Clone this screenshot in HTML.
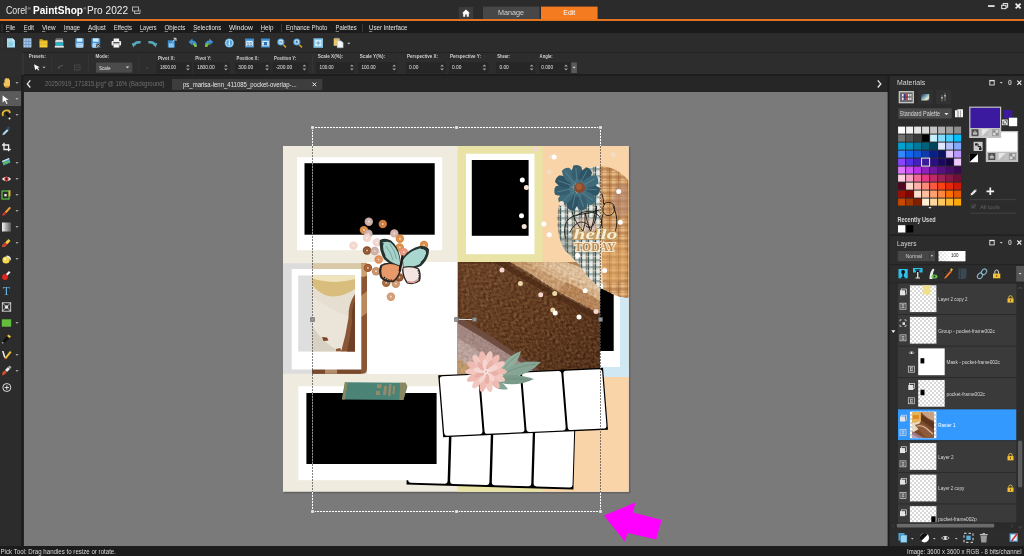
<!DOCTYPE html>
<html><head><meta charset="utf-8"><title>Corel PaintShop Pro 2022</title>
<style>
*{box-sizing:border-box;margin:0;padding:0}
html,body{width:1024px;height:556px;overflow:hidden;background:#2c2c2c;font-family:"Liberation Sans",sans-serif;color:#ddd}
.abs{position:absolute}
#title{left:0;top:0;width:1024px;height:19px;background:#2b2b2b}
#oline{left:0;top:19px;width:1024px;height:1.600px;background:#e2741f}
#menu{left:0;top:20.600px;width:1024px;height:12.600px;background:#1b1b1b}
#tool{left:0;top:33.200px;width:1024px;height:19px;background:#2c2c2c}
#opts{left:0;top:52px;width:1024px;height:24px;background:#2d2d2d}
#optline{left:22px;top:73.800px;width:1002px;height:1.900px;background:#1d1d1d}
#tabs{left:23.500px;top:75.700px;width:864.200px;height:16px;background:#262626}
#canvas{left:23.500px;top:91.700px;width:864.200px;height:454.300px;background:#7a7a7a}
#left{left:0;top:76px;width:22px;height:470px;background:#2c2c2c}
#right{left:888px;top:76px;width:136px;height:470px;background:#2c2c2c}
#status{left:0;top:546px;width:1024px;height:10px;background:#1c1c1c}
svg text{font-family:"Liberation Sans",sans-serif}
</style></head><body>
<div class="abs" id="title"></div>
<div class="abs" id="oline"></div>
<div class="abs" id="menu"></div>
<div class="abs" id="tool"></div>
<div class="abs" id="opts"></div>
<div class="abs" id="optline"></div>
<div class="abs" id="tabs"></div>
<div class="abs" id="canvas"></div>
<div class="abs" id="left"></div>
<div class="abs" id="right"></div>
<div class="abs" id="status"></div>
<svg class="abs" style="left:0;top:0;will-change:transform" width="1024" height="556" viewBox="0 0 1024 556">
<defs>
<pattern id="plaidA" width="7" height="7" patternUnits="userSpaceOnUse">
<rect width="7" height="7" fill="#a9b3ab"/><rect x="1.200" width="3.300" height="7" fill="#e4ebe8"/><rect width="1.100" height="7" fill="#3f5a56"/><rect x="5.300" width=".9" height="7" fill="#8f6852" opacity=".8"/><rect width="7" height="2.400" fill="#4f625c" opacity=".42"/><rect y="4.300" width="7" height=".9" fill="#f4efe4" opacity=".6"/>
</pattern>
<pattern id="plaidB" width="9" height="8" patternUnits="userSpaceOnUse">
<rect width="9" height="8" fill="#d29a60"/><rect width="3.500" height="8" fill="#e2b482"/><rect x="6" width="1.200" height="8" fill="#8f5a34" opacity=".55"/><rect width="9" height="2.600" fill="#9a6236" opacity=".45"/><rect y="4" width="9" height=".7" fill="#a97444" opacity=".5"/><rect y="5.600" width="9" height=".7" fill="#f0cfa0" opacity=".5"/><rect y="7" width="9" height=".6" fill="#a97444" opacity=".4"/>
</pattern>
<linearGradient id="bread" x1="0" y1="0" x2="1" y2="1">
<stop offset="0" stop-color="#6a4227"/><stop offset=".5" stop-color="#5c361d"/><stop offset="1" stop-color="#472713"/>
</linearGradient>
<filter id="grain" x="0" y="0" width="100%" height="100%">
<feTurbulence type="fractalNoise" baseFrequency="0.36" numOctaves="3" seed="7" result="n"/>
<feColorMatrix in="n" type="matrix" values="0 0 0 0 0  0 0 0 0 0  0 0 0 0 0  1.600 1.200 0 0 -1.050" result="a"/>
<feComposite in="SourceGraphic" in2="a" operator="in"/>
</filter>
<filter id="soft" x="-5%" y="-5%" width="110%" height="110%"><feGaussianBlur stdDeviation="1.200"/></filter>
<filter id="soft2" x="-5%" y="-5%" width="110%" height="110%"><feGaussianBlur stdDeviation=".5"/></filter>
<clipPath id="pageclip"><rect x="283" y="146" width="345.700" height="345.700"/></clipPath>
<clipPath id="breadclip"><rect x="457.500" y="262" width="142.500" height="116"/></clipPath>
<clipPath id="polclip"><rect x="312" y="275.500" width="43" height="76"/></clipPath>
<clipPath id="blobA"><path d="M600 166Q586 167 572 177Q559 192 556.800 220Q558 238 564.500 250L572 257L578 263.500L587.400 276L600 288.500Z"/></clipPath>
<clipPath id="blobB"><path d="M600 166Q618 167 628.700 181V297.500l-3 .5l-3-1l-3 0l-3-1.500l-3-.5l-3-2l-3-1l-3-2l-1.700-.5Z"/></clipPath>
</defs>
<rect x="284" y="147" width="346.500" height="346.500" fill="#000" opacity=".18"/>
<g clip-path="url(#pageclip)">
<rect x="283" y="146" width="346" height="346" fill="#efebdf"/>
<rect x="457.500" y="146" width="85.500" height="346" fill="#e9e3a6"/>
<rect x="542.600" y="146" width="86.500" height="346" fill="#f8d4a8"/>
<!-- top-left photo frame -->
<rect x="297" y="157.200" width="145.200" height="93" fill="#fff"/>
<rect x="304.500" y="163.200" width="130.200" height="71.500" fill="#000"/>
<!-- polaroid top middle -->
<rect x="466" y="153.700" width="68.500" height="100.500" fill="#fff"/>
<rect x="471.800" y="160" width="56.800" height="75.800" fill="#000"/>
<!-- gray + middle-left area -->
<rect x="283" y="263.200" width="84" height="110.500" fill="#dcdcdc"/>
<rect x="312" y="263.200" width="49.500" height="6" fill="#d9c9a6"/>
<path d="M361 263.200H367V369Q367 373.700 362 373.700H312V369H361Z" fill="#8a5636"/>
<path d="M361 263.200h6v12q-3 3-6 1z" fill="#caa070"/>
<path d="M361 296l6-5v22l-6 4z" fill="#b98a60"/>
<path d="M312 369h49v4.700h-49z" fill="#7a4a2e"/>
<path d="M325 369h12v4.700h-12z" fill="#c9a98a" opacity=".7"/>
<rect x="291.700" y="269" width="69.600" height="100.500" fill="#fff"/>
<rect x="298.200" y="275.500" width="56.600" height="76" fill="#dedede"/>
<g clip-path="url(#polclip)">
<rect x="312" y="275.500" width="43" height="76" fill="#e6ded0"/>
<path d="M312 275.500H355V289Q338 300 325 295Q316 291 312 284Z" fill="#d9bd7c"/>
<path d="M312 275.500H355V279Q335 285 312 278.500Z" fill="#efe3bc"/>
<path d="M312 296Q330 310 348 316L343 352H312Z" fill="#ebe4d8"/>
<path d="M312 326Q325 345 340 351.500H312Z" fill="#d9d0c4"/>
<path d="M355 294Q348 304 348.500 318Q346 335 341 352H355Z" fill="#8b5634"/>
<path d="M355 300Q351 310 352 322Q350 338 347 352H355Z" fill="#6e4126"/>
<path d="M322 337l5 .5l1.500 3l-5 .5z" fill="#7a4526"/>
<path d="M336 349l4-1l2 3.500h-6z" fill="#8b5634"/>
</g>
<rect x="367" y="262" width="90.500" height="112" fill="#fff"/>
<!-- plaid blob -->
<g clip-path="url(#blobA)"><rect x="550" y="160" width="52" height="140" fill="url(#plaidA)"/>
<ellipse cx="586" cy="226" rx="12" ry="9" fill="#e2c0ae" opacity=".65" filter="url(#soft)"/>
<rect x="556" y="236" width="20" height="30" fill="#5d6a62" opacity=".35" filter="url(#soft)"/></g>
<!-- right side frame -->
<rect x="600" y="284" width="20" height="83" fill="#fff"/>
<rect x="620" y="296" width="9" height="81" fill="#cfe8f4"/>
<rect x="600" y="367" width="29" height="10" fill="#cfe8f4"/>
<g clip-path="url(#blobB)"><rect x="598" y="160" width="32" height="140" fill="url(#plaidB)"/>
<ellipse cx="622" cy="200" rx="9" ry="17" fill="#b58670" opacity=".6" filter="url(#soft)"/>
<ellipse cx="614" cy="262" rx="14" ry="22" fill="#e3a661" opacity=".45" filter="url(#soft)"/></g>
<path d="M600 289.500l2-1l2 1.500l2 .5l2 1.500l2 .5l2 1.500l1.700 .5V351H600Z" fill="#000"/>

<g clip-path="url(#breadclip)">
<rect x="457.500" y="262" width="142.500" height="116" fill="url(#bread)"/>
<rect x="457.500" y="262" width="142.500" height="116" fill="#2a1206" filter="url(#grain)" opacity=".42"/>
<rect x="457.500" y="262" width="142.500" height="116" fill="#c89868" filter="url(#grain)" opacity=".35" transform="translate(3,2)"/>
<path d="M504 262Q540 284 566 298Q584 307 600 316v6Q570 306 545 292Q516 276 494 262Z" fill="#4a2a16" opacity=".7"/>
<path d="M510 262H600V313Q584 305 566 296Q545 284 528 272Z" fill="#c79a6c"/>
<path d="M526 262H600V302Q580 292 562 282Q545 272 526 262Z" fill="#dab489"/>
<path d="M540 262H590Q596 270 600 280V292Q570 280 540 262Z" fill="#e3c4a0"/>
<path d="M566 262H600V276Q584 268 566 262Z" fill="#b88a60"/>
<path d="M566 282Q584 290 600 301V313Q584 305 558 291Z" fill="#b47e4e"/>
<path d="M510 262H600V313Q584 305 566 296Q545 284 528 272Z" fill="#7a4a22" filter="url(#grain)" opacity=".3"/>
<path d="M510 262H600V313Q584 305 566 296Q545 284 528 272Z" fill="#fff2e0" filter="url(#grain)" opacity=".3" transform="translate(2,3)"/>
<path d="M457.500 316Q500 340 550 378H457.500Z" fill="#6e4c40"/>
<path d="M457.500 323Q500 347 543 378H457.500Z" fill="#ab8f8a"/>
<path d="M457.500 338Q488 356 514 378H457.500Z" fill="#c4aca6"/>
<path d="M457.500 358Q470 366 482 378H457.500Z" fill="#c9a274"/>
<path d="M457.500 323Q500 347 543 378H457.500Z" fill="#5a3a30" filter="url(#grain)" opacity=".25"/>
</g>
<g clip-path="url(#blobA)"><rect x="570" y="258" width="32" height="40" fill="url(#plaidA)"/></g>

<g transform="translate(406.500,484.600) rotate(1.700)">
<rect x="0" y="-64" width="167" height="64" fill="#000"/>
<rect x="1.500" y="-62.500" width="39.500" height="60.500" rx="3" fill="#fff"/>
<rect x="43.500" y="-62.500" width="39.300" height="60.500" rx="3" fill="#fff"/>
<rect x="85.200" y="-62.500" width="39.500" height="60.500" rx="3" fill="#fff"/>
<rect x="127" y="-62.500" width="39" height="60.500" rx="3" fill="#fff"/>
</g>
<!-- bottom-left frame -->
<rect x="298.300" y="386.200" width="144.400" height="94" fill="#fff"/>
<rect x="306.400" y="393" width="130.200" height="71" fill="#000"/>
<path d="M344.900 382.300L405.600 382.700L407.300 386.700L403.400 399.900L341.900 399.400Z" fill="#4b8377"/>
<path d="M344.900 382.300l3 0l-3 17.100l-3 0zM400 382.700l5.600 0l1.700 4l-3.900 13.200l-4 0z" fill="#9c8a5c" opacity=".75"/>
<path d="M377 384l5 .5l-1 4l-4-.5zM384 386l3 0l-1 9l-3 0zM376 391l4 0l0 4l-4 0zM389 384l2.500 0l-1 12l-2.500 0zM393 386l2 0l-.5 8l-2 0z" fill="#b58e62" opacity=".7"/>
<!-- pocket top row -->
<g transform="translate(438.200,375.300) rotate(-2.600) skewX(2)">
<rect x="0" y="0" width="165" height="62" fill="#000"/>
<rect x="1.300" y="1.200" width="38.400" height="59.500" rx="3" fill="#fff"/>
<rect x="41.700" y="1.200" width="40" height="59.500" rx="3" fill="#fff"/>
<rect x="83.700" y="1.200" width="39.300" height="59.500" rx="3" fill="#fff"/>
<rect x="125" y="1.200" width="38.800" height="59.500" rx="3" fill="#fff"/>
</g>

<path d="M499 371Q506 356 521 351Q518 364 506 373Z" fill="#8fae9c"/>
<path d="M501 373Q516 359 541 362Q529 375 507 379Z" fill="#86a594"/>
<path d="M499 376Q516 373 534 379Q518 387 501 383Z" fill="#7b9a8a"/>
<path d="M493 381Q501 379 508 389Q498 391 493 385Z" fill="#86a594"/>
<path d="M503 374Q518 366 536 364M502 379Q516 378 530 380M502 371Q510 360 519 354" stroke="#6a8a7a" stroke-width=".6" fill="none"/>
<ellipse cx="498.5" cy="371.6" rx="8.500" ry="3.500" fill="#eebab2" transform="rotate(0.0 486 371.6)"/>
<ellipse cx="498.5" cy="371.6" rx="8.500" ry="3.500" fill="#f2c8c0" transform="rotate(25.7 486 371.6)"/>
<ellipse cx="498.5" cy="371.6" rx="8.500" ry="3.500" fill="#eebab2" transform="rotate(51.4 486 371.6)"/>
<ellipse cx="498.5" cy="371.6" rx="8.500" ry="3.500" fill="#f2c8c0" transform="rotate(77.1 486 371.6)"/>
<ellipse cx="498.5" cy="371.6" rx="8.500" ry="3.500" fill="#eebab2" transform="rotate(102.9 486 371.6)"/>
<ellipse cx="498.5" cy="371.6" rx="8.500" ry="3.500" fill="#f2c8c0" transform="rotate(128.6 486 371.6)"/>
<ellipse cx="498.5" cy="371.6" rx="8.500" ry="3.500" fill="#eebab2" transform="rotate(154.3 486 371.6)"/>
<ellipse cx="498.5" cy="371.6" rx="8.500" ry="3.500" fill="#f2c8c0" transform="rotate(180.0 486 371.6)"/>
<ellipse cx="498.5" cy="371.6" rx="8.500" ry="3.500" fill="#eebab2" transform="rotate(205.7 486 371.6)"/>
<ellipse cx="498.5" cy="371.6" rx="8.500" ry="3.500" fill="#f2c8c0" transform="rotate(231.4 486 371.6)"/>
<ellipse cx="498.5" cy="371.6" rx="8.500" ry="3.500" fill="#eebab2" transform="rotate(257.1 486 371.6)"/>
<ellipse cx="498.5" cy="371.6" rx="8.500" ry="3.500" fill="#f2c8c0" transform="rotate(282.9 486 371.6)"/>
<ellipse cx="498.5" cy="371.6" rx="8.500" ry="3.500" fill="#eebab2" transform="rotate(308.6 486 371.6)"/>
<ellipse cx="498.5" cy="371.6" rx="8.500" ry="3.500" fill="#f2c8c0" transform="rotate(334.3 486 371.6)"/>
<ellipse cx="493" cy="371.6" rx="5.500" ry="2.600" fill="#e9b0a8" transform="rotate(12.0 486 371.6)"/>
<ellipse cx="493" cy="371.6" rx="5.500" ry="2.600" fill="#f6d6d0" transform="rotate(48.0 486 371.6)"/>
<ellipse cx="493" cy="371.6" rx="5.500" ry="2.600" fill="#e9b0a8" transform="rotate(84.0 486 371.6)"/>
<ellipse cx="493" cy="371.6" rx="5.500" ry="2.600" fill="#f6d6d0" transform="rotate(120.0 486 371.6)"/>
<ellipse cx="493" cy="371.6" rx="5.500" ry="2.600" fill="#e9b0a8" transform="rotate(156.0 486 371.6)"/>
<ellipse cx="493" cy="371.6" rx="5.500" ry="2.600" fill="#f6d6d0" transform="rotate(192.0 486 371.6)"/>
<ellipse cx="493" cy="371.6" rx="5.500" ry="2.600" fill="#e9b0a8" transform="rotate(228.0 486 371.6)"/>
<ellipse cx="493" cy="371.6" rx="5.500" ry="2.600" fill="#f6d6d0" transform="rotate(264.0 486 371.6)"/>
<ellipse cx="493" cy="371.6" rx="5.500" ry="2.600" fill="#e9b0a8" transform="rotate(300.0 486 371.6)"/>
<ellipse cx="493" cy="371.6" rx="5.500" ry="2.600" fill="#f6d6d0" transform="rotate(336.0 486 371.6)"/>
<circle cx="486" cy="371.6" r="2.600" fill="#f8e4e0"/><circle cx="486" cy="371.6" r="1" fill="#e0a8a0"/>
<path d="M581 188Q589 179.5 599.5 184.5Q601 189 598 192.5Q589 196 581 188Z" fill="#2f5464" transform="rotate(8.0 577 188)"/>
<path d="M583 188L597 187" stroke="#6a96a6" stroke-width=".8" opacity=".7" transform="rotate(8.0 577 188)"/>
<path d="M581 188Q589 179.5 599.5 184.5Q601 189 598 192.5Q589 196 581 188Z" fill="#3f6a7a" transform="rotate(40.7 577 188)"/>
<path d="M583 188L597 187" stroke="#6a96a6" stroke-width=".8" opacity=".7" transform="rotate(40.7 577 188)"/>
<path d="M581 188Q589 179.5 599.5 184.5Q601 189 598 192.5Q589 196 581 188Z" fill="#365e6e" transform="rotate(73.5 577 188)"/>
<path d="M583 188L597 187" stroke="#6a96a6" stroke-width=".8" opacity=".7" transform="rotate(73.5 577 188)"/>
<path d="M581 188Q589 179.5 599.5 184.5Q601 189 598 192.5Q589 196 581 188Z" fill="#2f5464" transform="rotate(106.2 577 188)"/>
<path d="M583 188L597 187" stroke="#6a96a6" stroke-width=".8" opacity=".7" transform="rotate(106.2 577 188)"/>
<path d="M581 188Q589 179.5 599.5 184.5Q601 189 598 192.5Q589 196 581 188Z" fill="#3f6a7a" transform="rotate(138.9 577 188)"/>
<path d="M583 188L597 187" stroke="#6a96a6" stroke-width=".8" opacity=".7" transform="rotate(138.9 577 188)"/>
<path d="M581 188Q589 179.5 599.5 184.5Q601 189 598 192.5Q589 196 581 188Z" fill="#365e6e" transform="rotate(171.6 577 188)"/>
<path d="M583 188L597 187" stroke="#6a96a6" stroke-width=".8" opacity=".7" transform="rotate(171.6 577 188)"/>
<path d="M581 188Q589 179.5 599.5 184.5Q601 189 598 192.5Q589 196 581 188Z" fill="#2f5464" transform="rotate(204.4 577 188)"/>
<path d="M583 188L597 187" stroke="#6a96a6" stroke-width=".8" opacity=".7" transform="rotate(204.4 577 188)"/>
<path d="M581 188Q589 179.5 599.5 184.5Q601 189 598 192.5Q589 196 581 188Z" fill="#3f6a7a" transform="rotate(237.1 577 188)"/>
<path d="M583 188L597 187" stroke="#6a96a6" stroke-width=".8" opacity=".7" transform="rotate(237.1 577 188)"/>
<path d="M581 188Q589 179.5 599.5 184.5Q601 189 598 192.5Q589 196 581 188Z" fill="#365e6e" transform="rotate(269.8 577 188)"/>
<path d="M583 188L597 187" stroke="#6a96a6" stroke-width=".8" opacity=".7" transform="rotate(269.8 577 188)"/>
<path d="M581 188Q589 179.5 599.5 184.5Q601 189 598 192.5Q589 196 581 188Z" fill="#2f5464" transform="rotate(302.5 577 188)"/>
<path d="M583 188L597 187" stroke="#6a96a6" stroke-width=".8" opacity=".7" transform="rotate(302.5 577 188)"/>
<path d="M581 188Q589 179.5 599.5 184.5Q601 189 598 192.5Q589 196 581 188Z" fill="#3f6a7a" transform="rotate(335.3 577 188)"/>
<path d="M583 188L597 187" stroke="#6a96a6" stroke-width=".8" opacity=".7" transform="rotate(335.3 577 188)"/>
<circle cx="578" cy="188" r="9" fill="#4b7a8a" opacity=".55"/>
<circle cx="579.700" cy="187.700" r="5.300" fill="#8a4a2c"/><circle cx="579" cy="186.800" r="3" fill="#a45e3a"/>
<g fill="none" stroke="#1c1814" stroke-width=".9" stroke-linecap="round">
<path d="M602 194Q604 200 603.500 204Q609 200.500 613.500 204.500Q616.500 210 612 214.500Q606 217.500 603 212Q602 207 604.500 204"/>
<path d="M613 206Q618 216 616.500 226Q616 231 614 234"/>
<path d="M565.400 238Q563 228 567 221Q572 215 580 214.500Q590 213.500 599 210"/>
<path d="M572 212Q576 224 583 231Q586 224 585 213Q588 224 590.500 232Q594 220 596.500 206Q598 216 594 224Q590 230 586 226"/>
<path d="M576 216Q584 210 592 212Q600 214 602 222Q601 230 594 233"/>
<path d="M570 232Q574 224 580 222Q588 222 590 228"/>
<path d="M603 214Q600 222 603 230"/>
</g>
<g font-weight="bold" text-anchor="middle" style="font-family:'Liberation Serif',serif">
<text style="font-family:'Liberation Serif',serif" x="595.500" y="239" font-size="14" font-style="italic" fill="#f7edd2" stroke="#c49b60" stroke-width="2" paint-order="stroke" textLength="44" lengthAdjust="spacingAndGlyphs">hello</text>
<text style="font-family:'Liberation Serif',serif" x="595" y="250.600" font-size="12.500" fill="#c08c56" stroke="#f6e8cc" stroke-width="2.200" paint-order="stroke" textLength="41" lengthAdjust="spacingAndGlyphs">TODAY</text>
</g>
<circle cx="368.8" cy="221.7" r="4.2" fill="#c9aaa2"/><circle cx="368.8" cy="221.7" r="2.500" fill="none" stroke="#fff" stroke-width=".7" opacity=".22"/><circle cx="368.8" cy="221.7" r="1.100" fill="#fff" opacity=".6"/>
<circle cx="382.8" cy="224.0" r="4.2" fill="#c87432"/><circle cx="382.8" cy="224.0" r="2.500" fill="none" stroke="#fff" stroke-width=".7" opacity=".22"/><circle cx="382.8" cy="224.0" r="1.100" fill="#fff" opacity=".6"/>
<circle cx="363.9" cy="230.1" r="4.2" fill="#d8883e"/><circle cx="363.9" cy="230.1" r="2.500" fill="none" stroke="#fff" stroke-width=".7" opacity=".22"/><circle cx="363.9" cy="230.1" r="1.100" fill="#fff" opacity=".6"/>
<circle cx="368.4" cy="233.7" r="4.2" fill="#c9aaa2"/><circle cx="368.4" cy="233.7" r="2.500" fill="none" stroke="#fff" stroke-width=".7" opacity=".22"/><circle cx="368.4" cy="233.7" r="1.100" fill="#fff" opacity=".6"/>
<circle cx="367.0" cy="237.9" r="4.2" fill="#f2d4cb"/><circle cx="367.0" cy="237.9" r="2.500" fill="none" stroke="#fff" stroke-width=".7" opacity=".22"/><circle cx="367.0" cy="237.9" r="1.100" fill="#fff" opacity=".6"/>
<circle cx="394.3" cy="233.4" r="4.2" fill="#d0b0a8"/><circle cx="394.3" cy="233.4" r="2.500" fill="none" stroke="#fff" stroke-width=".7" opacity=".22"/><circle cx="394.3" cy="233.4" r="1.100" fill="#fff" opacity=".6"/>
<circle cx="399.9" cy="238.8" r="4.2" fill="#d8883e"/><circle cx="399.9" cy="238.8" r="2.500" fill="none" stroke="#fff" stroke-width=".7" opacity=".22"/><circle cx="399.9" cy="238.8" r="1.100" fill="#fff" opacity=".6"/>
<circle cx="353.5" cy="245.6" r="4.2" fill="#f2d4cb"/><circle cx="353.5" cy="245.6" r="2.500" fill="none" stroke="#fff" stroke-width=".7" opacity=".22"/><circle cx="353.5" cy="245.6" r="1.100" fill="#fff" opacity=".6"/>
<circle cx="376.9" cy="242.4" r="4.2" fill="#f2d4cb"/><circle cx="376.9" cy="242.4" r="2.500" fill="none" stroke="#fff" stroke-width=".7" opacity=".22"/><circle cx="376.9" cy="242.4" r="1.100" fill="#fff" opacity=".6"/>
<circle cx="367.0" cy="250.5" r="4.2" fill="#8b4a22"/><circle cx="367.0" cy="250.5" r="2.500" fill="none" stroke="#fff" stroke-width=".7" opacity=".22"/><circle cx="367.0" cy="250.5" r="1.100" fill="#fff" opacity=".6"/>
<circle cx="374.7" cy="251.0" r="4.2" fill="#c9aaa2"/><circle cx="374.7" cy="251.0" r="2.500" fill="none" stroke="#fff" stroke-width=".7" opacity=".22"/><circle cx="374.7" cy="251.0" r="1.100" fill="#fff" opacity=".6"/>
<circle cx="424.0" cy="245.0" r="4.2" fill="#d8883e"/><circle cx="424.0" cy="245.0" r="2.500" fill="none" stroke="#fff" stroke-width=".7" opacity=".22"/><circle cx="424.0" cy="245.0" r="1.100" fill="#fff" opacity=".6"/>
<circle cx="399.7" cy="247.4" r="4.2" fill="#d8883e"/><circle cx="399.7" cy="247.4" r="2.500" fill="none" stroke="#fff" stroke-width=".7" opacity=".22"/><circle cx="399.7" cy="247.4" r="1.100" fill="#fff" opacity=".6"/>
<circle cx="403.8" cy="252.3" r="4.2" fill="#e89078"/><circle cx="403.8" cy="252.3" r="2.500" fill="none" stroke="#fff" stroke-width=".7" opacity=".22"/><circle cx="403.8" cy="252.3" r="1.100" fill="#fff" opacity=".6"/>
<circle cx="378.7" cy="259.5" r="4.2" fill="#e08850"/><circle cx="378.7" cy="259.5" r="2.500" fill="none" stroke="#fff" stroke-width=".7" opacity=".22"/><circle cx="378.7" cy="259.5" r="1.100" fill="#fff" opacity=".6"/>
<circle cx="367.9" cy="267.9" r="4.2" fill="#9a5428"/><circle cx="367.9" cy="267.9" r="2.500" fill="none" stroke="#fff" stroke-width=".7" opacity=".22"/><circle cx="367.9" cy="267.9" r="1.100" fill="#fff" opacity=".6"/>
<circle cx="376.0" cy="271.2" r="4.2" fill="#c48c62"/><circle cx="376.0" cy="271.2" r="2.500" fill="none" stroke="#fff" stroke-width=".7" opacity=".22"/><circle cx="376.0" cy="271.2" r="1.100" fill="#fff" opacity=".6"/>
<circle cx="386.2" cy="282.8" r="4.2" fill="#a06030"/><circle cx="386.2" cy="282.8" r="2.500" fill="none" stroke="#fff" stroke-width=".7" opacity=".22"/><circle cx="386.2" cy="282.8" r="1.100" fill="#fff" opacity=".6"/>
<circle cx="395.8" cy="283.7" r="4.2" fill="#c89068"/><circle cx="395.8" cy="283.7" r="2.500" fill="none" stroke="#fff" stroke-width=".7" opacity=".22"/><circle cx="395.8" cy="283.7" r="1.100" fill="#fff" opacity=".6"/>
<circle cx="390.9" cy="296.7" r="4.2" fill="#d09870"/><circle cx="390.9" cy="296.7" r="2.500" fill="none" stroke="#fff" stroke-width=".7" opacity=".22"/><circle cx="390.9" cy="296.7" r="1.100" fill="#fff" opacity=".6"/>
<circle cx="399.4" cy="277.4" r="4.2" fill="#8b4a22"/><circle cx="399.4" cy="277.4" r="2.500" fill="none" stroke="#fff" stroke-width=".7" opacity=".22"/><circle cx="399.4" cy="277.4" r="1.100" fill="#fff" opacity=".6"/>
<g>
<path d="M400.500 263Q400 248 391 240.500Q385 237.500 380 240Q378.500 250 384 259Q391 266 400 267Z" fill="#26322f"/>
<path d="M400 262.500Q399 249.500 390.500 242.500Q386 241 382.500 242.500Q381.500 251 386.500 258Q392 263.500 400 265.500Z" fill="#a6d2ca"/>
<path d="M383 243Q381 249 385 256" stroke="#26322f" stroke-width="1.400" fill="none"/>
<path d="M386 246Q391 252 393 260M390 244Q395 251 396.500 259" stroke="#5d8a84" stroke-width=".6" fill="none"/>
<path d="M402 259Q408 249 420 246Q427 245.500 429 249.500Q429 259 421 266Q412 271 403 268.500Z" fill="#26322f"/>
<path d="M403 260Q409 251 419.500 248.500Q424.500 248 426.500 250.500Q426 259 419 264.500Q411 268.500 403.500 267Z" fill="#a9d6ce"/>
<path d="M421 248Q427.500 248 427 254Q425 260 421 263" stroke="#26322f" stroke-width="1.800" fill="none"/>
<path d="M399.500 266Q389 260 380.500 265Q377.500 271 380.500 278Q386 283.500 394 282Q400 277 401 269Z" fill="#2c2624"/>
<path d="M399 266.300Q390 262 382.500 265.800Q380 271 382.500 277Q387.500 281.500 393.500 280.300Q398.500 276 399.700 269Z" fill="#e8996a"/>
<path d="M384 277Q388 281 393.500 280" stroke="#2c2624" stroke-width="1.300" fill="none" stroke-dasharray="1.500 1"/>
<path d="M403 267Q412 264.500 419 268.500Q422 274 420 281Q414 286 407 283.500Q402.500 278 402 270Z" fill="#2c2624"/>
<path d="M403.500 268Q411 265.800 418 269.300Q420.300 274.500 418.300 280.500Q413.500 284.500 408 282.500Q404 277.500 403.500 270.500Z" fill="#f2e4e0"/>
<path d="M407.500 281.500Q413 284 418 279.500" stroke="#d89088" stroke-width="1.400" fill="none"/>
<path d="M418 270Q420 275 418.500 280" stroke="#2c2624" stroke-width="1.200" fill="none" stroke-dasharray="1.500 1"/>
<path d="M401.500 255l2.300 .7l-2.900 16l-2.400-.8z" fill="#1f1a18"/>
</g>
<circle cx="522.3" cy="180" r="2.500" fill="#ffffff"/>
<circle cx="526.4" cy="187.5" r="2.500" fill="#f6e2d4"/>
<circle cx="521.5" cy="215.8" r="2.500" fill="#ffffff"/>
<circle cx="524.2" cy="226.6" r="2.500" fill="#f6e2d4"/>
<circle cx="535" cy="149" r="2.500" fill="#f4d6d0"/>
<circle cx="551.2" cy="156.5" r="2.500" fill="#f3dcc4"/>
<circle cx="554.2" cy="157" r="2.500" fill="#ffffff"/>
<circle cx="549.3" cy="171.8" r="2.500" fill="#f3dcc4"/>
<circle cx="543.9" cy="223.9" r="2.500" fill="#ffffff"/>
<circle cx="549.3" cy="234.7" r="2.500" fill="#ffffff"/>
<circle cx="561.5" cy="203.4" r="2.500" fill="#f6e2d4"/>
<circle cx="618.7" cy="191.5" r="2.500" fill="#ffffff"/>
<circle cx="620.3" cy="222.3" r="2.500" fill="#ffffff"/>
<circle cx="613.3" cy="154.8" r="2.500" fill="#f3dcc4"/>
<circle cx="502" cy="270" r="2.500" fill="#f4d6d0"/>
<circle cx="520.4" cy="283.4" r="2.500" fill="#ead6a8"/>
<circle cx="540.7" cy="294.8" r="2.500" fill="#f4d6d0"/>
<circle cx="554.7" cy="293.4" r="2.500" fill="#ead6a8"/>
<circle cx="552.8" cy="310" r="2.500" fill="#ead6a8"/>
<circle cx="555.2" cy="313" r="2.500" fill="#ffffff"/>
<circle cx="579" cy="317" r="2.500" fill="#ffffff"/>
<circle cx="585.2" cy="290.7" r="2.500" fill="#ffffff"/>
<circle cx="596" cy="311.5" r="2.500" fill="#f4d6d0"/>
<circle cx="604.6" cy="270.5" r="2.500" fill="#ffffff"/>
<circle cx="577.6" cy="255.6" r="2.500" fill="#ffffff"/>
</g>
<g fill="none" stroke-width="1" shape-rendering="crispEdges">
<path d="M312.500 146V127.500H600.500V146M312.500 492V511.500H600.500V492" stroke="#8a8a8a"/>
<path d="M312.500 146V127.500H600.500V146M312.500 492V511.500H600.500V492" stroke="#fff" stroke-dasharray="2 1"/>
<path d="M312.500 146V492M600.500 146V492" stroke="#4a4a4a" stroke-dasharray="2 1" opacity=".7"/>
<path d="M312.500 163.200V234.700M312.500 393V464" stroke="#8c8c8c" stroke-dasharray="2 1"/>
<line x1="458" y1="319.500" x2="473" y2="319.500" stroke="#d8d8d8"/>
</g>
<g fill="#e6e6e6" stroke="#6a6a6a" stroke-width=".8">
<rect x="310.700" y="125.700" width="3.600" height="3.600"/><rect x="454.700" y="125.700" width="3.600" height="3.600"/><rect x="598.700" y="125.700" width="3.600" height="3.600"/>
<rect x="310.700" y="317.700" width="3.600" height="3.600" fill="#9a9a9a"/><rect x="454.700" y="317.700" width="3.600" height="3.600" fill="#9a9a9a"/><rect x="598.700" y="317.700" width="3.600" height="3.600" fill="#9a9a9a"/>
<rect x="310.700" y="509.700" width="3.600" height="3.600"/><rect x="454.700" y="509.700" width="3.600" height="3.600"/><rect x="598.700" y="509.700" width="3.600" height="3.600"/>
<rect x="472.700" y="317.700" width="3.600" height="3.600" fill="#9a9a9a"/>
</g>
<polygon points="603.900,515.500 635.400,502.600 633,512.500 661.600,520 656.100,539.500 627.600,533 624.800,541.500" fill="#ff00ff"/>
</svg>

<svg class="abs" style="left:0;top:0;will-change:transform" width="1024" height="556" viewBox="0 0 1024 556">
<text x="6" y="14.3" font-size="10.5" fill="#e6e6e6" font-weight="normal" text-anchor="start" textLength="21" lengthAdjust="spacingAndGlyphs" >Corel</text>
<text x="27.6" y="9.5" font-size="4" fill="#ddd" font-weight="normal" text-anchor="start" textLength="3.5" lengthAdjust="spacingAndGlyphs" >®</text>
<text x="33" y="14.3" font-size="10.8" fill="#ffffff" font-weight="bold" text-anchor="start" textLength="50" lengthAdjust="spacingAndGlyphs" >PaintShop</text>
<text x="83.2" y="9.5" font-size="4" fill="#ddd" font-weight="normal" text-anchor="start" textLength="3" lengthAdjust="spacingAndGlyphs" >®</text>
<text x="87" y="14.3" font-size="10.8" fill="#f0f0f0" font-weight="normal" text-anchor="start" textLength="41" lengthAdjust="spacingAndGlyphs" >Pro 2022</text>
<g fill="none" stroke="#bdbdbd" stroke-width="0.9"><rect x="132.500" y="7" width="6" height="4"/><path d="M134.500 11v2.500h5.500v-4"/></g>
<rect x="458.700" y="7" width="14.500" height="12" fill="#3c3c3c"/>
<path d="M462 13.200l4-3.700l4 3.700h-1.200v3.600h-2v-2.400h-1.600v2.400h-2v-3.600z" fill="#fff"/>
<rect x="483" y="6.600" width="56.500" height="12.400" fill="#474747"/>
<text x="511" y="15.3" font-size="7.6" fill="#d4d4d4" font-weight="normal" text-anchor="middle" textLength="26" lengthAdjust="spacingAndGlyphs" >Manage</text>
<rect x="541" y="6.600" width="56.600" height="12.900" fill="#f47b20"/>
<text x="569.3" y="15.3" font-size="7.6" fill="#fff" font-weight="normal" text-anchor="middle" textLength="12" lengthAdjust="spacingAndGlyphs" >Edit</text>
<rect x="988" y="5.200" width="6.600" height="1.700" fill="#ececec"/>
<g fill="none" stroke="#dcdcdc" stroke-width="1.100"><rect x="1001.700" y="5.300" width="4.300" height="3.300"/><path d="M1003.300 5.300v-1.800h4.300v3.600h-1.600"/></g>
<path d="M1015.600 3.700l5 4.700m0-4.700l-5 4.700" stroke="#f4f4f4" stroke-width="1.700" fill="none"/>
<text x="6" y="30.3" font-size="6.8" fill="#e2e2e2" font-weight="normal" text-anchor="start" textLength="9.2" lengthAdjust="spacingAndGlyphs" >File</text>
<text x="23.8" y="30.3" font-size="6.8" fill="#e2e2e2" font-weight="normal" text-anchor="start" textLength="10.2" lengthAdjust="spacingAndGlyphs" >Edit</text>
<text x="42" y="30.3" font-size="6.8" fill="#e2e2e2" font-weight="normal" text-anchor="start" textLength="13.6" lengthAdjust="spacingAndGlyphs" >View</text>
<text x="63.8" y="30.3" font-size="6.8" fill="#e2e2e2" font-weight="normal" text-anchor="start" textLength="16.2" lengthAdjust="spacingAndGlyphs" >Image</text>
<text x="88" y="30.3" font-size="6.8" fill="#e2e2e2" font-weight="normal" text-anchor="start" textLength="17.8" lengthAdjust="spacingAndGlyphs" >Adjust</text>
<text x="113.8" y="30.3" font-size="6.8" fill="#e2e2e2" font-weight="normal" text-anchor="start" textLength="18.2" lengthAdjust="spacingAndGlyphs" >Effects</text>
<text x="140" y="30.3" font-size="6.8" fill="#e2e2e2" font-weight="normal" text-anchor="start" textLength="16.6" lengthAdjust="spacingAndGlyphs" >Layers</text>
<text x="164.6" y="30.3" font-size="6.8" fill="#e2e2e2" font-weight="normal" text-anchor="start" textLength="20.6" lengthAdjust="spacingAndGlyphs" >Objects</text>
<text x="193.3" y="30.3" font-size="6.8" fill="#e2e2e2" font-weight="normal" text-anchor="start" textLength="27.9" lengthAdjust="spacingAndGlyphs" >Selections</text>
<text x="229" y="30.3" font-size="6.8" fill="#e2e2e2" font-weight="normal" text-anchor="start" textLength="23.8" lengthAdjust="spacingAndGlyphs" >Window</text>
<text x="260.6" y="30.3" font-size="6.8" fill="#e2e2e2" font-weight="normal" text-anchor="start" textLength="12.9" lengthAdjust="spacingAndGlyphs" >Help</text>
<text x="286" y="30.3" font-size="6.8" fill="#e2e2e2" font-weight="normal" text-anchor="start" textLength="41.4" lengthAdjust="spacingAndGlyphs" >Enhance Photo</text>
<text x="335.6" y="30.3" font-size="6.8" fill="#e2e2e2" font-weight="normal" text-anchor="start" textLength="21.1" lengthAdjust="spacingAndGlyphs" >Palettes</text>
<text x="369" y="30.3" font-size="6.8" fill="#e2e2e2" font-weight="normal" text-anchor="start" textLength="38.5" lengthAdjust="spacingAndGlyphs" >User Interface</text>
<rect x="6" y="31.300" width="3.300" height="0.600" fill="#cfcfcf"/>
<rect x="23.8" y="31.300" width="3.300" height="0.600" fill="#cfcfcf"/>
<rect x="42" y="31.300" width="3.300" height="0.600" fill="#cfcfcf"/>
<rect x="63.8" y="31.300" width="3.300" height="0.600" fill="#cfcfcf"/>
<rect x="88" y="31.300" width="3.300" height="0.600" fill="#cfcfcf"/>
<rect x="124.3" y="31.300" width="3.300" height="0.600" fill="#cfcfcf"/>
<rect x="140" y="31.300" width="3.300" height="0.600" fill="#cfcfcf"/>
<rect x="164.6" y="31.300" width="3.300" height="0.600" fill="#cfcfcf"/>
<rect x="193.3" y="31.300" width="3.300" height="0.600" fill="#cfcfcf"/>
<rect x="229" y="31.300" width="3.300" height="0.600" fill="#cfcfcf"/>
<rect x="260.6" y="31.300" width="3.300" height="0.600" fill="#cfcfcf"/>
<rect x="290.2" y="31.300" width="3.300" height="0.600" fill="#cfcfcf"/>
<rect x="335.6" y="31.300" width="3.300" height="0.600" fill="#cfcfcf"/>
<rect x="369" y="31.300" width="3.300" height="0.600" fill="#cfcfcf"/>
<rect x="281" y="24" width="0.700" height="8" fill="#444"/><rect x="362" y="24" width="0.700" height="8" fill="#444"/>
<rect x="1.500" y="24" width="1" height="8" fill="#3a3a3a"/>
<rect x="1.500" y="37" width="1" height="11" fill="#3a3a3a"/>
<path d="M7 38.300h5.500l2.500 2.500v6.700h-8z" fill="#a9dcee"/><path d="M12.5 38.300v2.500h2.500z" fill="#e8f6fb"/><rect x="8.5" y="42" width="4" height="4" fill="#7fc4dc" opacity=".7"/>
<rect x="23.400" y="38.300" width="8" height="9.200" fill="#a9c9ea"/><path d="M26.100 38.300v9.200M28.800 38.300v9.200M23.400 41.400h8M23.400 44.400h8" stroke="#5f86b4" stroke-width=".7"/>
<path d="M39.500 39.300h3l1 1h4v2h-8z" fill="#d8a81c"/><path d="M39.500 41.500h8v6h-8z" fill="#f1c933"/><path d="M39.500 44h8" stroke="#c79a18" stroke-width=".6"/>
<path d="M56 38.500h6.500l1 4h-8.500z" fill="#d9d9d9"/><rect x="55.300" y="42.500" width="8" height="3.300" fill="#25b7c9"/><rect x="54.800" y="45.800" width="9" height="1.800" fill="#e8e8e8"/><rect x="56" y="38.500" width="6.500" height="1.200" fill="#444"/>
<rect x="75.2" y="38.300" width="8.800" height="9.300" rx=".8" fill="#3f95dc"/><rect x="76.8" y="38.300" width="5.600" height="3.400" fill="#d7ecfb"/><rect x="76.5" y="43.300" width="6.200" height="4.300" fill="#e9f3fb"/><rect x="77.2" y="44.500" width="4.800" height=".6" fill="#3f95dc"/><rect x="77.2" y="45.900" width="4.800" height=".6" fill="#3f95dc"/>
<rect x="91.4" y="38.300" width="8.800" height="9.300" rx=".8" fill="#3f95dc"/><rect x="93.0" y="38.300" width="5.600" height="3.400" fill="#d7ecfb"/><rect x="92.7" y="43.300" width="6.200" height="4.300" fill="#e9f3fb"/><rect x="93.4" y="44.500" width="4.800" height=".6" fill="#3f95dc"/><rect x="93.4" y="45.900" width="4.800" height=".6" fill="#3f95dc"/>
<rect x="96.300" y="43.600" width="4" height="4" fill="#2d2d2d"/><path d="M96.800 44.300l3 3m0-3l-3 3" stroke="#ddd" stroke-width=".8"/>
<rect x="113.600" y="38.500" width="5.500" height="3" fill="#f4f4f4"/><rect x="111.600" y="41" width="9.500" height="4.500" rx=".8" fill="#ededed"/><rect x="113.600" y="44" width="5.500" height="3.600" fill="#fafafa" stroke="#888" stroke-width=".5"/><rect x="113.200" y="42.200" width="6.300" height="1" fill="#333"/>
<path d="M134 45.500q1-4 6.600-3.200" fill="none" stroke="#56a9bd" stroke-width="2.500"/><path d="M131.600 43.200l4.600-.2l-2.800 4.500z" fill="#56a9bd"/>
<path d="M155 45.500q-1-4-6.600-3.200" fill="none" stroke="#56a9bd" stroke-width="2.500"/><path d="M157.400 43.200l-4.600-.2l2.800 4.500z" fill="#56a9bd"/>
<rect x="167.800" y="40.300" width="7" height="7.200" fill="#3a8ccc"/><rect x="168.800" y="43.300" width="5" height="4.200" fill="#8cc4ec"/><path d="M172 42.300l4-4m-2.600 0h2.600v2.600" stroke="#e8e8e8" stroke-width=".9" fill="none"/>
<path d="M188.500 42l4-3.600v2.200q4.500 0 4.500 5.500h-2q0-3-2.500-3v2.400z" fill="#3f8fd0"/><path d="M193 43q3.500 0 3.800 4h-2.500q0-2-1.300-2.200z" fill="#7fc243"/>
<path d="M213.300 42l-4-3.600v2.200q-4.500 0-4.500 5.500h2q0-3 2.500-3v2.400z" fill="#3f8fd0"/><path d="M208.800 43q-3.500 0-3.800 4h2.500q0-2 1.300-2.200z" fill="#7fc243"/>
<circle cx="229.300" cy="43" r="4.600" fill="#4ea3dc"/><circle cx="229.300" cy="43" r="3.600" fill="none" stroke="#d9eefb" stroke-width=".7"/><rect x="228.700" y="42.200" width="1.200" height="3.200" fill="#fff"/><rect x="228.700" y="40.400" width="1.200" height="1.200" fill="#fff"/>
<rect x="245" y="38.500" width="9" height="9" fill="#3b8fd6"/><rect x="246.2" y="40.800" width="6.600" height="5.500" fill="#dbeefb"/><text x="249.5" y="45.7" font-size="4.5" fill="#1c4f86" font-weight="bold" text-anchor="middle" textLength="5" lengthAdjust="spacingAndGlyphs" >1:1</text>
<rect x="261" y="38.500" width="9" height="9" fill="#3b8fd6"/><rect x="262.2" y="40.800" width="6.600" height="5.500" fill="#dbeefb"/><text x="265.5" y="45.7" font-size="4.5" fill="#1c4f86" font-weight="bold" text-anchor="middle" textLength="5" lengthAdjust="spacingAndGlyphs" ></text>
<rect x="263.300" y="42" width="4.400" height="3.400" fill="#2a6cb0"/><path d="M262.600 43.700l1.400-1.400v2.800zM268.400 43.700l-1.400-1.400v2.800z" fill="#fff"/>
<circle cx="280.8" cy="42" r="3.600" fill="#4fa0d8"/><circle cx="280.8" cy="42" r="2.400" fill="#cfe7f8"/><path d="M283.3 44.700l2.700 2.700" stroke="#d6a020" stroke-width="1.500"/><rect x="279.3" y="41.600" width="3" height=".8" fill="#245c90"/>
<circle cx="296.8" cy="42" r="3.600" fill="#4fa0d8"/><circle cx="296.8" cy="42" r="2.400" fill="#cfe7f8"/><path d="M299.3 44.700l2.700 2.700" stroke="#d6a020" stroke-width="1.500"/><rect x="295.3" y="41.600" width="3" height=".8" fill="#245c90"/><rect x="296.4" y="40.500" width=".8" height="3" fill="#245c90"/>
<rect x="313.500" y="38.300" width="9.500" height="9.500" fill="#86c6e8"/><rect x="315.200" y="40" width="6" height="6" fill="#d5edf9"/><path d="M318.200 41v4M316.200 43h4" stroke="#4b94c4" stroke-width=".8"/>
<rect x="333.700" y="38.300" width="6" height="7.500" fill="#e8c66a"/><rect x="335" y="37.800" width="3.400" height="1.500" fill="#9a9a9a"/><path d="M337.200 40.800h4l2 2v5h-6z" fill="#f2f6fa" stroke="#8aa" stroke-width=".4"/>
<path d="M347.300 42.800h3l-1.500 1.600z" fill="#ccc"/>
<rect x="22.500" y="52" width="1001.500" height="1" fill="#222"/>
<rect x="22.500" y="53" width="1.200" height="22" fill="#3a3a3a"/>
<text x="28.8" y="58.4" font-size="5.9" fill="#d0d0d0" font-weight="bold" text-anchor="start" textLength="17.2" lengthAdjust="spacingAndGlyphs" >Presets:</text>
<path d="M34.600 64l0 6l1.700-1.500l1.300 2.500l1-.5l-1.300-2.400l2.300-.1z" fill="#fff" transform="rotate(-12 36 67)"/>
<path d="M42.500 66.800h3l-1.500 1.500z" fill="#ccc"/>
<path d="M58.500 69q0.500-3.500 4.500-3.500" fill="none" stroke="#555" stroke-width="1.100"/><path d="M58 66.500l2 .2l-1.300 2z" fill="#555"/>
<rect x="74.500" y="65" width="5.500" height="5" fill="none" stroke="#4c4c4c" stroke-width=".8"/><rect x="76" y="67" width="2.500" height=".8" fill="#4c4c4c"/>
<rect x="51" y="55" width=".7" height="18" fill="#383838"/><rect x="88" y="55" width=".7" height="18" fill="#383838"/>
<text x="95.6" y="58.4" font-size="5.9" fill="#d0d0d0" font-weight="bold" text-anchor="start" textLength="13.3" lengthAdjust="spacingAndGlyphs" >Mode:</text>
<rect x="96" y="62.600" width="36.300" height="10" fill="#4b4b4b"/>
<text x="99" y="69.8" font-size="6" fill="#e4e4e4" font-weight="normal" text-anchor="start" textLength="11.5" lengthAdjust="spacingAndGlyphs" >Scale</text>
<path d="M125.800 66.500h3.400l-1.700 1.800z" fill="#e0e0e0"/>
<rect x="138.500" y="55" width=".7" height="18" fill="#383838"/>
<path d="M146 67.600h2.600l-1.300 1.400z" fill="#555"/>
<rect x="156.5" y="62.300" width="35.0" height="11" fill="#262626"/>
<text x="158" y="59.6" font-size="5.9" fill="#d0d0d0" font-weight="bold" text-anchor="start" textLength="17" lengthAdjust="spacingAndGlyphs" >Pivot X:</text>
<text x="160" y="69.3" font-size="6.2" fill="#e2e2e2" font-weight="normal" text-anchor="start" textLength="16" lengthAdjust="spacingAndGlyphs" >1800.00</text>
<path d="M186.0 66.600l1.900-2.100l1.900 2.100zM186.0 68.400l1.900 2.100l1.900-2.100z" fill="#a2a2a2"/>
<rect x="193.7" y="62.300" width="35.80000000000001" height="11" fill="#262626"/>
<text x="195.2" y="59.6" font-size="5.9" fill="#d0d0d0" font-weight="bold" text-anchor="start" textLength="16.2" lengthAdjust="spacingAndGlyphs" >Pivot Y:</text>
<text x="197.2" y="69.3" font-size="6.2" fill="#e2e2e2" font-weight="normal" text-anchor="start" textLength="17.5" lengthAdjust="spacingAndGlyphs" >1800.00</text>
<path d="M224.0 66.600l1.900-2.100l1.900 2.100zM224.0 68.400l1.900 2.100l1.900-2.100z" fill="#a2a2a2"/>
<rect x="235" y="62.300" width="35.5" height="11" fill="#262626"/>
<text x="236.6" y="59.6" font-size="5.9" fill="#d0d0d0" font-weight="bold" text-anchor="start" textLength="22.2" lengthAdjust="spacingAndGlyphs" >Position X:</text>
<text x="238.2" y="69.3" font-size="6.2" fill="#e2e2e2" font-weight="normal" text-anchor="start" textLength="15" lengthAdjust="spacingAndGlyphs" >300.00</text>
<path d="M265.2 66.600l1.900-2.100l1.900 2.100zM265.2 68.400l1.900 2.100l1.900-2.100z" fill="#a2a2a2"/>
<rect x="272.5" y="62.300" width="35.5" height="11" fill="#262626"/>
<text x="274" y="59.6" font-size="5.9" fill="#d0d0d0" font-weight="bold" text-anchor="start" textLength="22.2" lengthAdjust="spacingAndGlyphs" >Position Y:</text>
<text x="275.7" y="69.3" font-size="6.2" fill="#e2e2e2" font-weight="normal" text-anchor="start" textLength="16.6" lengthAdjust="spacingAndGlyphs" >-200.00</text>
<path d="M302.5 66.600l1.900-2.100l1.900 2.100zM302.5 68.400l1.900 2.100l1.900-2.100z" fill="#a2a2a2"/>
<rect x="316" y="62.300" width="38.5" height="11" fill="#262626"/>
<text x="317.7" y="58" font-size="5.9" fill="#d0d0d0" font-weight="bold" text-anchor="start" textLength="25.3" lengthAdjust="spacingAndGlyphs" >Scale X(%):</text>
<text x="319.6" y="69.3" font-size="6.2" fill="#e2e2e2" font-weight="normal" text-anchor="start" textLength="14.1" lengthAdjust="spacingAndGlyphs" >100.00</text>
<path d="M350.0 66.600l1.900-2.100l1.900 2.100zM350.0 68.400l1.900 2.100l1.900-2.100z" fill="#a2a2a2"/>
<rect x="358" y="62.300" width="39" height="11" fill="#262626"/>
<text x="359.7" y="58" font-size="5.9" fill="#d0d0d0" font-weight="bold" text-anchor="start" textLength="25.3" lengthAdjust="spacingAndGlyphs" >Scale Y(%):</text>
<text x="361.5" y="69.3" font-size="6.2" fill="#e2e2e2" font-weight="normal" text-anchor="start" textLength="14.1" lengthAdjust="spacingAndGlyphs" >100.00</text>
<path d="M392.3 66.600l1.900-2.100l1.900 2.100zM392.3 68.400l1.900 2.100l1.900-2.100z" fill="#a2a2a2"/>
<rect x="406" y="62.300" width="39.60000000000002" height="11" fill="#262626"/>
<text x="407" y="58.3" font-size="5.9" fill="#d0d0d0" font-weight="bold" text-anchor="start" textLength="31" lengthAdjust="spacingAndGlyphs" >Perspective X:</text>
<text x="409" y="69.3" font-size="6.2" fill="#e2e2e2" font-weight="normal" text-anchor="start" textLength="9.3" lengthAdjust="spacingAndGlyphs" >0.00</text>
<path d="M440.2 66.600l1.900-2.100l1.900 2.100zM440.2 68.400l1.900 2.100l1.900-2.100z" fill="#a2a2a2"/>
<rect x="449" y="62.300" width="39.60000000000002" height="11" fill="#262626"/>
<text x="449.9" y="58.3" font-size="5.9" fill="#d0d0d0" font-weight="bold" text-anchor="start" textLength="31.1" lengthAdjust="spacingAndGlyphs" >Perspective Y:</text>
<text x="452" y="69.3" font-size="6.2" fill="#e2e2e2" font-weight="normal" text-anchor="start" textLength="9.3" lengthAdjust="spacingAndGlyphs" >0.00</text>
<path d="M482.5 66.600l1.900-2.100l1.900 2.100zM482.5 68.400l1.900 2.100l1.900-2.100z" fill="#a2a2a2"/>
<rect x="496" y="62.300" width="39" height="11" fill="#262626"/>
<text x="497.2" y="58.3" font-size="5.9" fill="#d0d0d0" font-weight="bold" text-anchor="start" textLength="12.8" lengthAdjust="spacingAndGlyphs" >Shear:</text>
<text x="499.4" y="69.3" font-size="6.2" fill="#e2e2e2" font-weight="normal" text-anchor="start" textLength="9.3" lengthAdjust="spacingAndGlyphs" >0.00</text>
<path d="M529.8 66.600l1.900-2.100l1.900 2.100zM529.8 68.400l1.900 2.100l1.900-2.100z" fill="#a2a2a2"/>
<rect x="539" y="62.300" width="31" height="11" fill="#262626"/>
<text x="539.6" y="58.3" font-size="5.9" fill="#d0d0d0" font-weight="bold" text-anchor="start" textLength="13.1" lengthAdjust="spacingAndGlyphs" >Angle:</text>
<text x="541.3" y="69.3" font-size="6.2" fill="#e2e2e2" font-weight="normal" text-anchor="start" textLength="11.7" lengthAdjust="spacingAndGlyphs" >0.000</text>
<path d="M564.0999999999999 66.600l1.900-2.100l1.900 2.100zM564.0999999999999 68.400l1.900 2.100l1.900-2.100z" fill="#a2a2a2"/>
<rect x="571.300" y="62.500" width="5.600" height="10.500" fill="#5a5a5a"/><path d="M572.600 66.800h3l-1.500 1.600z" fill="#e0e0e0"/>
<rect x="312" y="55" width=".7" height="18" fill="#383838"/>
<path d="M30.300 80.300l-3 3.600l3 3.600" fill="none" stroke="#e8e8e8" stroke-width="1.300"/>
<text x="45" y="86.3" font-size="6.4" fill="#6f6f6f" font-weight="normal" text-anchor="start" textLength="119.5" lengthAdjust="spacingAndGlyphs" >20250919_171815.jpg* @  16% (Background)</text>
<rect x="172" y="79" width="150.300" height="11" fill="#3d3d3d"/>
<text x="183" y="86.5" font-size="6.4" fill="#e6e6e6" font-weight="normal" text-anchor="start" textLength="113.6" lengthAdjust="spacingAndGlyphs" >ps_marisa-lenn_411085_pocket-overlap-...</text>
<path d="M312.600 82.600l3.600 3.600m0-3.600l-3.600 3.600" stroke="#eee" stroke-width="1" fill="none"/>
<path d="M877.800 80.300l3 3.600l-3 3.600" fill="none" stroke="#e8e8e8" stroke-width="1.300"/>
<text x="0.5" y="553.6" font-size="6.3" fill="#dadada" font-weight="normal" text-anchor="start" textLength="115.5" lengthAdjust="spacingAndGlyphs" >Pick Tool: Drag handles to resize or rotate.</text>
<text x="1021.5" y="553.6" font-size="6.3" fill="#dadada" font-weight="normal" text-anchor="end" textLength="114.5" lengthAdjust="spacingAndGlyphs" >Image:  3600 x 3600 x RGB - 8 bits/channel</text>
<rect x="0" y="91.100" width="21.300" height="14.900" fill="#5b5b5b"/>
<rect x="21.300" y="75.700" width="2.200" height="470.300" fill="#1c1c1c"/>
<path d="M15.500 82.2h3l-1.500 1.600z" fill="#cfcfcf"/>
<path d="M15.500 98.2h3l-1.500 1.600z" fill="#cfcfcf"/>
<path d="M15.500 114.2h3l-1.500 1.600z" fill="#cfcfcf"/>
<path d="M15.500 162.2h3l-1.500 1.600z" fill="#cfcfcf"/>
<path d="M15.500 178.2h3l-1.500 1.600z" fill="#cfcfcf"/>
<path d="M15.500 194.2h3l-1.500 1.600z" fill="#cfcfcf"/>
<path d="M15.500 210.2h3l-1.500 1.600z" fill="#cfcfcf"/>
<path d="M15.500 226.2h3l-1.500 1.600z" fill="#cfcfcf"/>
<path d="M15.500 242.2h3l-1.500 1.600z" fill="#cfcfcf"/>
<path d="M15.500 258.2h3l-1.500 1.600z" fill="#cfcfcf"/>
<path d="M15.500 322.2h3l-1.500 1.600z" fill="#cfcfcf"/>
<path d="M15.500 354.2h3l-1.500 1.600z" fill="#cfcfcf"/>
<path d="M15.500 370.2h3l-1.500 1.600z" fill="#cfcfcf"/>
<path d="M3.500 83.500q0-1 1-1v-2.500q0-.8.800-.8v-.4q0-.8 1-.8t1 .8q0-.6.900-.6t.9.700v.6q.9 0 .9.900v4q0 3-3 3q-2 0-3-1.500z" fill="#f2c25e"/><path d="M4.500 86l5 0l-1 1.500h-3z" fill="#d9982e"/>
<path d="M2.300 95l0 8l2.300-2l1.800 3.300l1.500-.8l-1.800-3.200l3.200-.3z" fill="#fff" stroke="#333" stroke-width=".4"/>
<path d="M3 116q-1.500-4 2.500-5.500q4-1 4.500 2.500" fill="none" stroke="#e9b832" stroke-width="1.800"/><path d="M5 113l4 4.500l1-1l-3.500-4.500z" fill="#111"/><circle cx="9.500" cy="118.500" r="1" fill="#eee"/>
<path d="M2.300 135.300l.8-2.300l4-4l1.500 1.500l-4 4z" fill="#a9dcf0"/><path d="M6.300 128.200l1.500-1.500q1.200-.6 2 .2t.2 2l-1.500 1.500z" fill="#2b4a66"/>
<path d="M4 142.800v6.700h6.700M2 145h6.600v6.300" fill="none" stroke="#f0f0f0" stroke-width="1.300"/>
<path d="M2 161l7-3l1.500 4.500l-7 3z" fill="#4aa3e0"/><path d="M3.300 162.300l2-1.800l1.300 1.300l1.500-1.500l1.200 2l-5 2.200z" fill="#5cba47"/><path d="M2 161l7-3l.4 1.100l-7 3z" fill="#dfe9f0"/>
<path d="M1.800 179q4.700-4.500 9.400 0q-4.700 4.500-9.400 0z" fill="#f3f3f3"/><circle cx="6.500" cy="179" r="2.200" fill="#d9312b"/><circle cx="6.500" cy="179" r="0.900" fill="#3a0b0b"/>
<rect x="2" y="191" width="7" height="8" fill="none" stroke="#55b948" stroke-width="1.300"/><rect x="8.700" y="190.300" width="1.800" height="6" fill="#f0b030"/><rect x="4.300" y="194" width="2.400" height="2.400" fill="#e8e8e8"/>
<path d="M2 215.500q.5-3 2.500-3.500l1.500 1.500q-.5 2-4 2z" fill="#d6342c"/><path d="M4.800 211.800l4.700-5l1.500 1.300l-4.700 5.200z" fill="#f0a030"/>
<defs><linearGradient id="lg1" x1="0" x2="1"><stop offset="0" stop-color="#f4f4f4"/><stop offset="1" stop-color="#5a5a5a"/></linearGradient></defs><rect x="2" y="222.500" width="9" height="9" fill="url(#lg1)"/>
<path d="M2 247l1-2.500l5.500-5.500l2 2l-5.500 5.500z" fill="#f2cf3a"/><path d="M2 247l1-2.500l2.300-2.300l2 2l-2.300 2.300z" fill="#d8322c"/>
<circle cx="6" cy="260" r="3.600" fill="#f3d94a"/><path d="M6.500 255.500q4 0 4.500 3.500l-1 2q-.5-3.500-3.500-4z" fill="#e9e9e9"/><circle cx="5" cy="259" r="1.200" fill="#fbf2b0"/>
<circle cx="5" cy="277" r="2.900" fill="#e0261f"/><path d="M6 274l3-3l1.500 1.500l-3 3z" fill="#f1f1f1"/>
<text x="6.5" y="295.3" font-size="12" fill="#63b4e6" font-weight="normal" text-anchor="middle" style="font-family:'Liberation Serif',serif">T</text>
<rect x="2.300" y="302.800" width="8.400" height="8.400" fill="none" stroke="#e8e8e8" stroke-width=".8"/><path d="M2.300 302.800l8.400 8.400m0-8.400l-8.400 8.400" stroke="#e8e8e8" stroke-width=".8"/><circle cx="6.500" cy="307" r="1.800" fill="#e8e8e8"/>
<rect x="1.800" y="319.300" width="9.400" height="7.400" fill="#63bf3c"/>
<path d="M2 343.500l1-3l5-5.500l2.500 2l-5.500 5.500z" fill="#111"/><path d="M7 336l1.500-1.500l2.500 2l-1.500 1.700z" fill="#f0c23a"/><path d="M2 343.500l.6-1.800l1.200 1.200z" fill="#eee"/>
<path d="M2 351l1.500 0l2 6l-1.300 1z" fill="#f2f2f2"/><path d="M4.500 358l5.500-7l1.500 1.200l-5.500 7z" fill="#f0c23a"/><path d="M4 359.500l.8-1.800l1.200 1z" fill="#c8322c"/>
<path d="M2 375.500l.5-3l2-2l2 2l-2 2z" fill="#d9502a"/><path d="M5 370l3-3l2 2l-3 3z" fill="#e9e9e9"/><path d="M8.300 366.800l1.200-1.200l2 2l-1.200 1.200z" fill="#b9b9b9"/>
<circle cx="6.800" cy="387.500" r="4" fill="none" stroke="#f0f0f0" stroke-width=".9"/><path d="M6.800 385.300v4.400M4.600 387.500h4.400" stroke="#f0f0f0" stroke-width=".9"/>
<rect x="887.600" y="75.700" width="1.900" height="470.300" fill="#1c1c1c"/>
<text x="897" y="84.8" font-size="7.6" fill="#d6d6d6" font-weight="normal" text-anchor="start" textLength="28.2" lengthAdjust="spacingAndGlyphs" >Materials</text>
<rect x="989.800" y="80.4" width="4.400" height="4.600" fill="none" stroke="#e0e0e0" stroke-width=".9"/><rect x="989.800" y="80.10000000000001" width="4.400" height="1.200" fill="#e0e0e0"/><path d="M999.700 82.0h3l-1.500 1.600z" fill="#d8d8d8"/><rect x="1008.800" y="80.4" width="2.200" height="4.200" rx=".6" fill="none" stroke="#d8d8d8" stroke-width=".9"/><path d="M1017.300 80.60000000000001l4 4.200m0-4.200l-4 4.200" stroke="#eee" stroke-width="1.100" fill="none"/>
<rect x="899.300" y="91.700" width="14" height="11" fill="#6a6a6a" stroke="#cfcfcf" stroke-width="1.200"/>
<rect x="902" y="94" width="1.500" height="6" fill="#e8e8e8"/><rect x="904" y="94" width="1.500" height="6" fill="#3c3ca0"/><rect x="906" y="94" width="1.500" height="6" fill="#c84a4a"/><rect x="908" y="94" width="1.500" height="6" fill="#e8e8e8"/><rect x="910" y="94" width="1.500" height="6" fill="#cfcfcf"/><rect x="902" y="96.500" width="9.500" height="1" fill="#444"/>
<defs><linearGradient id="mg" x1="0" y1="0" x2="1" y2="1"><stop offset="0" stop-color="#1d2a5c"/><stop offset=".5" stop-color="#8fb8c8"/><stop offset=".75" stop-color="#f2f0c0"/><stop offset="1" stop-color="#3a4a8a"/></linearGradient></defs><rect x="921.200" y="94" width="8" height="6.500" fill="url(#mg)"/>
<rect x="936" y="90" width="15" height="14" fill="#323232"/><rect x="918" y="90" width="15" height="14" fill="#303030"/><rect x="921.200" y="94" width="8" height="6.500" fill="url(#mg)"/>
<path d="M942 95v6.500M945 93v8" stroke="#777" stroke-width="1"/><rect x="941" y="97" width="2" height="1.500" fill="#aaa"/><rect x="944" y="95" width="2" height="1.500" fill="#aaa"/>
<rect x="898.400" y="108.300" width="53.300" height="10.300" fill="#4b4b4b"/>
<text x="899.5" y="115.8" font-size="6.5" fill="#d8d8d8" font-weight="normal" text-anchor="start" textLength="40.5" lengthAdjust="spacingAndGlyphs" >Standard Palette</text>
<path d="M944.300 113h4.200l-2.100 2.200z" fill="#e6e6e6"/>
<path d="M955 110.200h2.500v-1h5.500v8h-8z" fill="#f2f2f2"/><rect x="957.500" y="110.500" width="1" height="6.500" fill="#888"/><rect x="960" y="110.500" width="1" height="6.500" fill="#aaa"/>
<rect x="898.1" y="126.6" width="7" height="7" fill="#ffffff"/>
<rect x="906.1" y="126.6" width="7" height="7" fill="#f3f3f3"/>
<rect x="914.1" y="126.6" width="7" height="7" fill="#e6e6e6"/>
<rect x="922.1" y="126.6" width="7" height="7" fill="#dadada"/>
<rect x="930.1" y="126.6" width="7" height="7" fill="#c6c6c6"/>
<rect x="938.1" y="126.6" width="7" height="7" fill="#b2b2b2"/>
<rect x="946.1" y="126.6" width="7" height="7" fill="#a0a0a0"/>
<rect x="954.1" y="126.6" width="7" height="7" fill="#8c8c8c"/>
<rect x="898.1" y="134.6" width="7" height="7" fill="#727272"/>
<rect x="906.1" y="134.6" width="7" height="7" fill="#525252"/>
<rect x="914.1" y="134.6" width="7" height="7" fill="#3a3a3a"/>
<rect x="922.1" y="134.6" width="7" height="7" fill="#000000"/>
<rect x="930.1" y="134.6" width="7" height="7" fill="#c8f0ff"/>
<rect x="938.1" y="134.6" width="7" height="7" fill="#84dcff"/>
<rect x="946.1" y="134.6" width="7" height="7" fill="#44d0ff"/>
<rect x="954.1" y="134.6" width="7" height="7" fill="#04c0fc"/>
<rect x="898.1" y="142.6" width="7" height="7" fill="#00a2d2"/>
<rect x="906.1" y="142.6" width="7" height="7" fill="#0092ba"/>
<rect x="914.1" y="142.6" width="7" height="7" fill="#007a9a"/>
<rect x="922.1" y="142.6" width="7" height="7" fill="#00627a"/>
<rect x="930.1" y="142.6" width="7" height="7" fill="#00445c"/>
<rect x="938.1" y="142.6" width="7" height="7" fill="#e0e8ff"/>
<rect x="946.1" y="142.6" width="7" height="7" fill="#b2c2ff"/>
<rect x="954.1" y="142.6" width="7" height="7" fill="#84a8ff"/>
<rect x="898.1" y="150.6" width="7" height="7" fill="#3388ff"/>
<rect x="906.1" y="150.6" width="7" height="7" fill="#1166f2"/>
<rect x="914.1" y="150.6" width="7" height="7" fill="#1058d8"/>
<rect x="922.1" y="150.6" width="7" height="7" fill="#0c3cb0"/>
<rect x="930.1" y="150.6" width="7" height="7" fill="#0a2088"/>
<rect x="938.1" y="150.6" width="7" height="7" fill="#0a1460"/>
<rect x="946.1" y="150.6" width="7" height="7" fill="#e2c8ff"/>
<rect x="954.1" y="150.6" width="7" height="7" fill="#ba98ff"/>
<rect x="898.1" y="158.6" width="7" height="7" fill="#8844ff"/>
<rect x="906.1" y="158.6" width="7" height="7" fill="#5530e8"/>
<rect x="914.1" y="158.6" width="7" height="7" fill="#4420c0"/>
<rect x="922.1" y="158.6" width="7" height="7" fill="#3a1a9e"/>
<rect x="930.1" y="158.6" width="7" height="7" fill="#2a1080"/>
<rect x="938.1" y="158.6" width="7" height="7" fill="#1c0860"/>
<rect x="946.1" y="158.6" width="7" height="7" fill="#140440"/>
<rect x="954.1" y="158.6" width="7" height="7" fill="#f0c8ff"/>
<rect x="898.1" y="166.6" width="7" height="7" fill="#e078ff"/>
<rect x="906.1" y="166.6" width="7" height="7" fill="#d050f8"/>
<rect x="914.1" y="166.6" width="7" height="7" fill="#b830e8"/>
<rect x="922.1" y="166.6" width="7" height="7" fill="#9020c0"/>
<rect x="930.1" y="166.6" width="7" height="7" fill="#7018a0"/>
<rect x="938.1" y="166.6" width="7" height="7" fill="#581080"/>
<rect x="946.1" y="166.6" width="7" height="7" fill="#480c68"/>
<rect x="954.1" y="166.6" width="7" height="7" fill="#380850"/>
<rect x="898.1" y="174.6" width="7" height="7" fill="#ffd0e0"/>
<rect x="906.1" y="174.6" width="7" height="7" fill="#f8a0c0"/>
<rect x="914.1" y="174.6" width="7" height="7" fill="#f06898"/>
<rect x="922.1" y="174.6" width="7" height="7" fill="#e83888"/>
<rect x="930.1" y="174.6" width="7" height="7" fill="#c02868"/>
<rect x="938.1" y="174.6" width="7" height="7" fill="#a02058"/>
<rect x="946.1" y="174.6" width="7" height="7" fill="#881848"/>
<rect x="954.1" y="174.6" width="7" height="7" fill="#701038"/>
<rect x="898.1" y="182.6" width="7" height="7" fill="#500820"/>
<rect x="906.1" y="182.6" width="7" height="7" fill="#ffd8d0"/>
<rect x="914.1" y="182.6" width="7" height="7" fill="#ffb0a8"/>
<rect x="922.1" y="182.6" width="7" height="7" fill="#ff8878"/>
<rect x="930.1" y="182.6" width="7" height="7" fill="#ff5840"/>
<rect x="938.1" y="182.6" width="7" height="7" fill="#ff4010"/>
<rect x="946.1" y="182.6" width="7" height="7" fill="#e82808"/>
<rect x="954.1" y="182.6" width="7" height="7" fill="#d01808"/>
<rect x="898.1" y="190.6" width="7" height="7" fill="#a01000"/>
<rect x="906.1" y="190.6" width="7" height="7" fill="#800800"/>
<rect x="914.1" y="190.6" width="7" height="7" fill="#ffe0d0"/>
<rect x="922.1" y="190.6" width="7" height="7" fill="#ffc0a0"/>
<rect x="930.1" y="190.6" width="7" height="7" fill="#ffa070"/>
<rect x="938.1" y="190.6" width="7" height="7" fill="#ff8840"/>
<rect x="946.1" y="190.6" width="7" height="7" fill="#ff7000"/>
<rect x="954.1" y="190.6" width="7" height="7" fill="#e85800"/>
<rect x="898.1" y="198.6" width="7" height="7" fill="#c84800"/>
<rect x="906.1" y="198.6" width="7" height="7" fill="#a03800"/>
<rect x="914.1" y="198.6" width="7" height="7" fill="#802000"/>
<rect x="922.1" y="198.6" width="7" height="7" fill="#fff0d8"/>
<rect x="930.1" y="198.6" width="7" height="7" fill="#ffd8a0"/>
<rect x="938.1" y="198.6" width="7" height="7" fill="#ffc860"/>
<rect x="946.1" y="198.6" width="7" height="7" fill="#ffb830"/>
<rect x="954.1" y="198.6" width="7" height="7" fill="#ffa808"/>
<rect x="921.600" y="158.100" width="8" height="8" fill="none" stroke="#e8e8e8" stroke-width="1"/>
<path d="M928.300 207h3.400l-1.700 1.800z" fill="#ddd"/>
<rect x="985.800" y="131" width="32.400" height="31" fill="#bfbfbf"/><rect x="987" y="132.200" width="30" height="19.500" fill="#ffffff"/>
<rect x="988.3" y="153" width="7" height="7" fill="#4f4f4f"/><rect x="989.8" y="156" width="4" height="2.500" fill="#bbb"/><rect x="990.8" y="154.5" width="2" height="1.500" fill="#999"/><rect x="998.5999999999999" y="153" width="7" height="7" fill="#e6e6e6"/><path d="M998.5999999999999 160l7-7v7z" fill="#bdbdbd"/><rect x="1008.9" y="153" width="7" height="7" fill="#9a9a9a"/><rect x="1009.9" y="154" width="5" height="5" fill="#dcdcdc"/><path d="M1009.9 154h2.500v2.500h-2.500zM1012.4 156.5h2.500v2.500h-2.500z" fill="#8a8a8a"/>
<rect x="969.200" y="106.600" width="32" height="31.400" fill="#c4c4c4"/><rect x="970.400" y="107.800" width="29.600" height="20.200" fill="#3b1a9f"/>
<rect x="971.5" y="129.2" width="7" height="7" fill="#4f4f4f"/><rect x="973.0" y="132.2" width="4" height="2.500" fill="#bbb"/><rect x="974.0" y="130.7" width="2" height="1.500" fill="#999"/><rect x="981.8" y="129.2" width="7" height="7" fill="#e6e6e6"/><path d="M981.8 136.2l7-7v7z" fill="#bdbdbd"/><rect x="992.1" y="129.2" width="7" height="7" fill="#9a9a9a"/><rect x="993.1" y="130.2" width="5" height="5" fill="#dcdcdc"/><path d="M993.1 130.2h2.500v2.500h-2.500zM995.6 132.7h2.500v2.500h-2.500z" fill="#8a8a8a"/>
<rect x="1003.800" y="110" width="8.400" height="8.200" fill="#3b1a9f"/><rect x="1008.900" y="117.700" width="8.300" height="8.500" fill="#fff"/>
<rect x="1002" y="119.500" width="5.700" height="5.700" fill="#e4e4e4"/><path d="M1003.200 121v3h3" fill="none" stroke="#333" stroke-width=".8"/><path d="M1004.500 120.700h2v2" fill="none" stroke="#333" stroke-width=".7"/>
<rect x="973.600" y="141.800" width="9" height="9.200" fill="#c9c9c9"/><path d="M975.500 144h2.500v2.500h2.500v2.500" fill="none" stroke="#222" stroke-width="1"/><path d="M975 143.500h2v2h-2zM979 147.500h2.500v2.500h-2.500z" fill="#222"/>
<rect x="969.400" y="154" width="8.600" height="8.200" fill="#fff"/><path d="M969.400 154h8.600l-8.600 8.200z" fill="#000"/>
<path d="M970.500 195.500l.7-2.300l4.400-4.400l1.600 1.600l-4.400 4.400z" fill="#e8e8e8"/><path d="M974.800 189.600l.8-.8l1.600 1.600l-.8.800z" fill="#555"/>
<path d="M990.300 187.500v7.600M986.500 191.300h7.600" stroke="#f2f2f2" stroke-width="1.700"/>
<rect x="970" y="199.400" width="46" height=".7" fill="#4a4a4a"/><rect x="970" y="212.800" width="46" height=".7" fill="#4a4a4a"/>
<rect x="970.800" y="203.800" width="5" height="5" fill="#3a3a3a"/><path d="M971.800 206.300l1.300 1.400l2.400-3" fill="none" stroke="#5e5e5e" stroke-width=".9"/>
<text x="980.3" y="208.6" font-size="6.2" fill="#636363" font-weight="normal" text-anchor="start" textLength="19.4" lengthAdjust="spacingAndGlyphs" >All tools</text>
<text x="897.4" y="222.3" font-size="6.7" fill="#d8d8d8" font-weight="bold" text-anchor="start" textLength="38.3" lengthAdjust="spacingAndGlyphs" >Recently Used</text>
<rect x="898" y="225.200" width="7.300" height="7.300" fill="#fff"/><rect x="906.300" y="225.200" width="7" height="7.300" fill="#000"/>
<rect x="890" y="234.500" width="134" height="1.200" fill="#1c1c1c"/>
<text x="897" y="245.7" font-size="7.8" fill="#d6d6d6" font-weight="normal" text-anchor="start" textLength="19.5" lengthAdjust="spacingAndGlyphs" >Layers</text>
<rect x="989.800" y="240.3" width="4.400" height="4.600" fill="none" stroke="#e0e0e0" stroke-width=".9"/><rect x="989.800" y="240.0" width="4.400" height="1.200" fill="#e0e0e0"/><path d="M999.700 241.9h3l-1.500 1.600z" fill="#d8d8d8"/><rect x="1008.800" y="240.3" width="2.200" height="4.200" rx=".6" fill="none" stroke="#d8d8d8" stroke-width=".9"/><path d="M1017.300 240.5l4 4.200m0-4.200l-4 4.200" stroke="#eee" stroke-width="1.100" fill="none"/>
<rect x="897.700" y="251" width="37.400" height="10.200" fill="#474747"/>
<text x="905.5" y="258.4" font-size="5.8" fill="#cfcfcf" font-weight="normal" text-anchor="start" textLength="16.5" lengthAdjust="spacingAndGlyphs" >Normal</text>
<rect x="929" y="252" width=".6" height="8" fill="#333"/><path d="M930.600 255.300h2.600l-1.300 1.400z" fill="#ddd"/>
<defs><pattern id="chk" width="4" height="4" patternUnits="userSpaceOnUse"><rect width="4" height="4" fill="#fff"/><rect width="2" height="2" fill="#d8d8d8"/><rect x="2" y="2" width="2" height="2" fill="#d8d8d8"/></pattern><linearGradient id="fade" x1="0" x2="1"><stop offset="0" stop-color="#fff" stop-opacity="0"/><stop offset=".55" stop-color="#fff" stop-opacity="1"/></linearGradient></defs>
<rect x="938.500" y="251" width="26.800" height="10.200" fill="url(#chk)"/><rect x="938.500" y="251" width="26.800" height="10.200" fill="url(#fade)"/>
<text x="951" y="257" font-size="5.8" fill="#222" font-weight="normal" text-anchor="start" textLength="7.5" lengthAdjust="spacingAndGlyphs" >100</text>
<rect x="890" y="264.400" width="134" height=".8" fill="#1f1f1f"/>
<rect x="898.500" y="269" width="9.200" height="9.300" fill="#2fc0ee"/><circle cx="903.100" cy="272" r="1.900" fill="#111"/><rect x="902.400" y="272" width="1.400" height="6" fill="#111"/><rect x="901" y="277.300" width="4.200" height="1" fill="#111"/>
<rect x="913" y="268" width="9.500" height="4.500" fill="#2fc0ee"/><circle cx="917.700" cy="272" r="1.800" fill="#111"/><rect x="917" y="272" width="1.400" height="6" fill="#ddd"/><rect x="915.500" y="277.500" width="4.500" height="1" fill="#ddd"/><rect x="915" y="269.300" width="5.500" height="1" fill="#111"/>
<path d="M929.500 279q0-7 3.500-10.500l1.500 1q-2 3-2 9.500z" fill="#eaeaea"/><ellipse cx="934.500" cy="276.500" rx="3" ry="2" fill="#6cc04a"/><circle cx="934.500" cy="276.500" r=".9" fill="#143"/>
<path d="M944 279l1-2.500l5.500-6l1.500 1.300l-5.500 6z" fill="#e0702a"/><path d="M950 270l1.500-1.700l1.500 1.300l-1.500 1.700z" fill="#f3c23a"/><path d="M943.500 271.500l1.500 1.500m3-3.500l-1 1m-3 6l1.500-1" stroke="#111" stroke-width="1"/>
<path d="M958.500 268.500h8v8.500l-2 2h-6z" fill="#3a4852"/><path d="M960.500 268.500v10" stroke="#2a343c" stroke-width=".7"/>
<g fill="none" stroke="#86b4c6" stroke-width="1.100"><ellipse cx="980" cy="275.800" rx="2.300" ry="3" transform="rotate(40 980 275.800)"/><ellipse cx="984" cy="271.800" rx="2.300" ry="3" transform="rotate(40 984 271.800)"/></g>
<rect x="993" y="273.500" width="7.300" height="4.800" fill="#f1c232"/><path d="M994.800 273.500v-1.500q0-2 1.850-2t1.850 2v1.500" fill="none" stroke="#d8d8d8" stroke-width="1"/><rect x="996.100" y="275" width="1.100" height="1.900" fill="#8a5a10"/>
<rect x="1016.200" y="266" width="7.800" height="15.500" fill="#565656"/><path d="M1018.600 273h3l-1.500 1.600z" fill="#e6e6e6"/>
<rect x="890" y="282.600" width="134" height=".8" fill="#1f1f1f"/>
<rect x="898" y="283.500" width="118.500" height="239" fill="#3a3a3a"/>
<rect x="890" y="283.500" width="8" height="239" fill="#2c2c2c"/>
<rect x="898" y="314.2" width="118.500" height=".8" fill="#262626"/><rect x="909.9" y="285.3" width="26.500" height="26.800" fill="url(#chk)"/><rect x="922.800" y="285.300" width="7.700" height="9.300" fill="#efe08c"/><text x="938.1999999999999" y="301.0" font-size="5.8" fill="#dadada" font-weight="normal" text-anchor="start" textLength="29.2" lengthAdjust="spacingAndGlyphs" >Layer 2 copy 2</text><rect x="1007.5" y="298.3" width="6" height="4.300" fill="#f1c232"/><path d="M1008.8 298.3v-1q0-1.600 1.700-1.600t1.700 1.600v1" fill="none" stroke="#f1c232" stroke-width=".9"/><rect x="1010.0" y="299.5" width="1" height="1.800" fill="#7a4a10"/>
<rect x="900" y="290.3" width="5" height="5" fill="#e4e4e4"/><rect x="901.3" y="289.0" width="5" height="5" fill="none" stroke="#e4e4e4" stroke-width=".7"/>
<rect x="900" y="303.2" width="6" height="6" fill="none" stroke="#dcdcdc" stroke-width=".7"/><path d="M901.5 304.7h3M901.5 307.7h3M902.2 304.7v3M903.8 304.7v3" stroke="#dcdcdc" stroke-width=".7"/>
<rect x="898" y="345.75" width="118.500" height=".8" fill="#262626"/><rect x="909.9" y="316.85" width="26.500" height="26.800" fill="url(#chk)"/><text x="938.1999999999999" y="332.55" font-size="5.8" fill="#dadada" font-weight="normal" text-anchor="start" textLength="56.8" lengthAdjust="spacingAndGlyphs" >Group - pocket-frame002c</text>
<g fill="none" stroke="#e0e0e0" stroke-width=".8"><path d="M900 321.35v-1.500h1.500M904.500 319.85h1.500v1.500M906 324.85v1.500h-1.500M901.500 326.35h-1.500v-1.500"/></g><rect x="902.500" y="322.35" width="2.500" height="2.500" fill="#e8e8e8"/>
<rect x="900" y="334.85" width="6" height="6" fill="none" stroke="#dcdcdc" stroke-width=".7"/><path d="M901.5 336.35h3M901.5 339.35h3M902.2 336.35v3M903.8 336.35v3" stroke="#dcdcdc" stroke-width=".7"/>
<path d="M891.300 330.15000000000003h4l-2 2.800z" fill="#f2f2f2"/>
<rect x="898" y="377.3" width="118.500" height=".8" fill="#262626"/><rect x="918.1999999999999" y="348.40000000000003" width="26.500" height="26.800" fill="#fff"/><rect x="920.500" y="358.20000000000005" width="3.800" height="5.200" fill="#000"/><text x="946.4999999999999" y="364.1" font-size="5.8" fill="#dadada" font-weight="normal" text-anchor="start" textLength="53.5" lengthAdjust="spacingAndGlyphs" >Mask - pocket-frame002c</text>
<path d="M908.500 352.70000000000005q3-2.600 6 0q-3 2.600-6 0z" fill="#e6e6e6"/><circle cx="910" cy="352.70000000000005" r=".8" fill="#333"/><circle cx="913" cy="352.70000000000005" r=".8" fill="#333"/>
<rect x="908.3" y="366.20000000000005" width="6" height="6" fill="none" stroke="#dcdcdc" stroke-width=".7"/><path d="M909.8 367.70000000000005h3M909.8 370.70000000000005h3M910.5 367.70000000000005v3M912.0999999999999 367.70000000000005v3" stroke="#dcdcdc" stroke-width=".7"/>
<rect x="898" y="408.85" width="118.500" height=".8" fill="#262626"/><rect x="918.1999999999999" y="379.95000000000005" width="26.500" height="26.800" fill="url(#chk)"/><rect x="920.500" y="389.75000000000006" width="4" height="5.500" fill="#000"/><text x="946.4999999999999" y="395.65000000000003" font-size="5.8" fill="#dadada" font-weight="normal" text-anchor="start" textLength="38.5" lengthAdjust="spacingAndGlyphs" >pocket-frame002c</text>
<rect x="908.3" y="384.95000000000005" width="5" height="5" fill="#e4e4e4"/><rect x="909.5999999999999" y="383.65000000000003" width="5" height="5" fill="none" stroke="#e4e4e4" stroke-width=".7"/>
<rect x="908.3" y="397.75000000000006" width="6" height="6" fill="none" stroke="#dcdcdc" stroke-width=".7"/><path d="M909.8 399.25000000000006h3M909.8 402.25000000000006h3M910.5 399.25000000000006v3M912.0999999999999 399.25000000000006v3" stroke="#dcdcdc" stroke-width=".7"/>
<rect x="898" y="409.3" width="118.500" height="31" fill="#3399ff"/><rect x="898" y="440.4" width="118.500" height=".8" fill="#262626"/><rect x="909.9" y="411.5" width="26.500" height="26.800" fill="url(#chk)"/><g transform="translate(911.900,412.0)"><clipPath id="rt"><rect width="22.300" height="25.900"/></clipPath><g clip-path="url(#rt)">
<rect width="22.300" height="25.900" fill="#7a4a2c"/>
<path d="M0 0h9v10q-4 3-9 3z" fill="#e6b45a"/><path d="M1 3h6v4h-6z" fill="#e08a2a"/><path d="M0 11q5 0 8-2l-1 8l-7 4z" fill="#e8dcc8"/>
<path d="M9 0h13.300v9q-7-2-13.300-9z" fill="#c9a080"/><path d="M10 3l12 8v6l-13-9z" fill="#5e3620"/>
<path d="M3 13q6-3 10 0l9 8v4.900h-8z" fill="#8f5a3a"/><path d="M5 14q5-1 9 2l7 6" stroke="#d8b8a0" stroke-width="1.200" fill="none"/>
<path d="M0 19l12 6.900h-12z" fill="#9a7a86"/><path d="M0 22l7 3.900h-7z" fill="#b9a0b0"/>
</g></g><text x="938.1999999999999" y="427.2" font-size="5.8" fill="#fff" font-weight="normal" text-anchor="start" textLength="17.5" lengthAdjust="spacingAndGlyphs" >Raster 1</text>
<rect x="900" y="416.5" width="5" height="5" fill="#e4e4e4"/><rect x="901.3" y="415.2" width="5" height="5" fill="none" stroke="#e4e4e4" stroke-width=".7"/>
<rect x="900" y="429.4" width="6" height="6" fill="none" stroke="#dcdcdc" stroke-width=".7"/><path d="M901.5 430.9h3M901.5 433.9h3M902.2 430.9v3M903.8 430.9v3" stroke="#dcdcdc" stroke-width=".7"/>
<rect x="898" y="471.95" width="118.500" height=".8" fill="#262626"/><rect x="909.9" y="443.05" width="26.500" height="26.800" fill="url(#chk)"/><text x="938.1999999999999" y="458.75" font-size="5.8" fill="#dadada" font-weight="normal" text-anchor="start" textLength="15.5" lengthAdjust="spacingAndGlyphs" >Layer 2</text><rect x="1007.5" y="456.05" width="6" height="4.300" fill="#f1c232"/><path d="M1008.8 456.05v-1q0-1.600 1.700-1.600t1.700 1.600v1" fill="none" stroke="#f1c232" stroke-width=".9"/><rect x="1010.0" y="457.25" width="1" height="1.800" fill="#7a4a10"/>
<rect x="900" y="448.05" width="5" height="5" fill="#e4e4e4"/><rect x="901.3" y="446.75" width="5" height="5" fill="none" stroke="#e4e4e4" stroke-width=".7"/>
<rect x="900" y="460.85" width="6" height="6" fill="none" stroke="#dcdcdc" stroke-width=".7"/><path d="M901.5 462.35h3M901.5 465.35h3M902.2 462.35v3M903.8 462.35v3" stroke="#dcdcdc" stroke-width=".7"/>
<rect x="898" y="503.5" width="118.500" height=".8" fill="#262626"/><rect x="909.9" y="474.6" width="26.500" height="26.800" fill="url(#chk)"/><text x="938.1999999999999" y="490.3" font-size="5.8" fill="#dadada" font-weight="normal" text-anchor="start" textLength="26" lengthAdjust="spacingAndGlyphs" >Layer 2 copy</text><rect x="1007.5" y="487.6" width="6" height="4.300" fill="#f1c232"/><path d="M1008.8 487.6v-1q0-1.600 1.700-1.600t1.700 1.600v1" fill="none" stroke="#f1c232" stroke-width=".9"/><rect x="1010.0" y="488.8" width="1" height="1.800" fill="#7a4a10"/>
<rect x="900" y="479.6" width="5" height="5" fill="#e4e4e4"/><rect x="901.3" y="478.3" width="5" height="5" fill="none" stroke="#e4e4e4" stroke-width=".7"/>
<rect x="900" y="492.40000000000003" width="6" height="6" fill="none" stroke="#dcdcdc" stroke-width=".7"/><path d="M901.5 493.90000000000003h3M901.5 496.90000000000003h3M902.2 493.90000000000003v3M903.8 493.90000000000003v3" stroke="#dcdcdc" stroke-width=".7"/>
<rect x="909.900" y="506.15" width="26.500" height="16.149999999999977" fill="url(#chk)"/><rect x="931.300" y="516.300" width="4.300" height="6" fill="#000"/>
<text x="938.2" y="521.3" font-size="5.8" fill="#dadada" font-weight="normal" text-anchor="start" textLength="38.5" lengthAdjust="spacingAndGlyphs" >pocket-frame002p</text>
<rect x="900" y="511.15" width="5" height="5" fill="#e4e4e4"/><rect x="901.3" y="509.84999999999997" width="5" height="5" fill="none" stroke="#e4e4e4" stroke-width=".7"/>
<rect x="1016.500" y="283.500" width="7.500" height="239" fill="#2c2c2c"/>
<path d="M1018.300 289l1.900-2l1.900 2" fill="none" stroke="#555" stroke-width=".8"/>
<rect x="1018" y="440.800" width="4.200" height="46.500" rx="1" fill="#5c5c5c"/>
<rect x="890" y="522.700" width="134" height="6.300" fill="#2a2a2a"/><rect x="896.800" y="523.700" width="97.400" height="3.900" rx="1" fill="#6a6a6a"/>
<path d="M894 523.700l-1.800 2.200l1.800 2.200M1011 523.700l1.800 2.200l-1.800 2.200" fill="none" stroke="#444" stroke-width=".8"/>
<path d="M1018.300 526.300l1.900 2l1.900-2" fill="none" stroke="#555" stroke-width=".8"/>
<rect x="898.500" y="533" width="6" height="7.500" fill="#4aa8d8"/><rect x="900.500" y="535" width="6.500" height="7.500" fill="#9ad4ee" stroke="#2c6c94" stroke-width=".5"/>
<path d="M911 538h2.600l-1.300 1.400z" fill="#ccc"/>
<circle cx="924.500" cy="537.800" r="4.600" fill="#fff"/><path d="M921.200 541a4.600 4.600 0 0 1 6.500-6.500z" fill="#111"/>
<path d="M933 538h2.600l-1.300 1.400z" fill="#ccc"/>
<path d="M941 538q4.300-3.800 8.600 0q-4.300 3.800-8.600 0z" fill="#e9e9e9"/><circle cx="943.300" cy="538" r="1.100" fill="#333"/><circle cx="947.300" cy="538" r="1.100" fill="#333"/>
<path d="M955 538h2.600l-1.300 1.400z" fill="#ccc"/>
<rect x="964" y="533.300" width="9" height="9" fill="none" stroke="#e4e4e4" stroke-width="1" stroke-dasharray="2.500 2"/><rect x="966.300" y="535.600" width="4.400" height="4.400" fill="#5ab0d8"/>
<path d="M980.500 535.500h6.500l-.7 7h-5.100z" fill="#9a9a9a"/><rect x="979.800" y="534" width="7.900" height="1.200" fill="#b8b8b8"/><rect x="982.500" y="533" width="2.500" height="1" fill="#b8b8b8"/>
<rect x="1009.500" y="533.300" width="8.500" height="8.500" fill="#4a9cd4"/><rect x="1010.700" y="534.500" width="6.100" height="6.100" fill="#e8f2fa"/><path d="M1011.500 541l5.500-7" stroke="#d0302a" stroke-width="1.500"/>
</svg>
</body></html>
